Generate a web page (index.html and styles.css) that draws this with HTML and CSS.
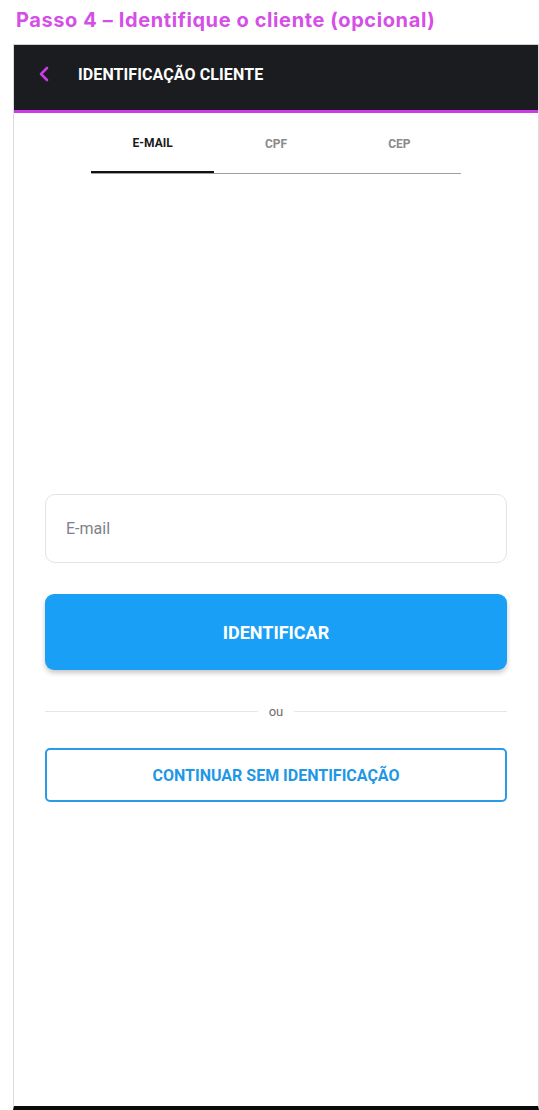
FILE: index.html
```html
<!DOCTYPE html>
<html lang="pt-BR">
<head>
    <meta charset="UTF-8">
    <meta name="viewport" content="width=device-width, initial-scale=1.0">
    <title>Passo 4 - Identifique o cliente</title>
    <link rel="stylesheet" href="styles.css">
</head>
<body>
    <h1 class="step-title">Passo 4 – Identifique o cliente (opcional)</h1>

    <div class="phone">
        <header class="app-bar">
            <button class="back-btn" aria-label="Voltar">
                <svg width="12" height="16" viewBox="0 0 12 16">
                    <path d="M9 2 L3 8 L9 14" fill="none" stroke="#c93ce6" stroke-width="2.6" stroke-linecap="round" stroke-linejoin="round"/>
                </svg>
            </button>
            <span class="app-bar-title">IDENTIFICAÇÃO CLIENTE</span>
        </header>

        <nav class="tabs">
            <div class="tab active">E-MAIL</div>
            <div class="tab">CPF</div>
            <div class="tab">CEP</div>
        </nav>

        <main class="form-area">
            <div class="field">
                <input type="email" placeholder="E-mail">
            </div>
            <button class="btn-primary">IDENTIFICAR</button>

            <div class="divider">
                <span>ou</span>
            </div>

            <button class="btn-outline">CONTINUAR SEM IDENTIFICAÇÃO</button>
        </main>
    </div>
</body>
</html>
```

FILE: styles.css
```css
html, body {
    margin: 0;
    padding: 0;
    background-color: #ffffff;
    height: 100%;
}

body {
    font-family: Roboto, 'Noto Sans', sans-serif;
    display: flex;
    flex-direction: column;
}

.step-title {
    margin: 0;
    padding: 8px 0 0 16px;
    height: 36px;
    box-sizing: border-box;
    font-family: Inter, 'Noto Sans', sans-serif;
    font-size: 20px;
    font-weight: 700;
    color: #d44fe6;
    letter-spacing: 0.6px;
}

/* telefone */
.phone {
    margin-left: 13px;
    margin-top: 8px;
    flex: 1;
    display: flex;
    flex-direction: column;
    border-left: 1px solid #dcdcdc;
    border-right: 1px solid #dcdcdc;
    border-top: 1px solid #cfcfcf;
    border-bottom: 4px solid #0a0a0a;
    background-color: #ffffff;
}

.app-bar {
    height: 68px;
    box-sizing: border-box;
    padding-bottom: 7px;
    background-color: #1b1c20;
    border-bottom: 3px solid #c93ce6;
    display: flex;
    align-items: center;
    padding-left: 24px;
    gap: 26px;
}

.back-btn {
    background: none;
    border: none;
    padding: 0;
    width: 14px;
    display: flex;
    align-items: center;
    cursor: pointer;
}

.app-bar-title {
    color: #ffffff;
    font-weight: 700;
    font-size: 16px;
    letter-spacing: 0.1px;
}

/* abas */
.tabs {
    width: 370px;
    margin: 0 auto;
    display: flex;
    border-bottom: 1px solid #9e9e9e;
}

.tab {
    flex: 1;
    height: 60px;
    padding-top: 2px;
    display: flex;
    align-items: center;
    justify-content: center;
    font-size: 12px;
    font-weight: 700;
    color: #8a8a8a;
    box-sizing: border-box;
}

.tab.active {
    color: #1a1a1a;
    border-bottom: 2px solid #111111;
    margin-bottom: -1px;
}

/* formulario */
.form-area {
    padding: 320px 31px 0 31px;
    display: flex;
    flex-direction: column;
}

.field input {
    width: 100%;
    box-sizing: border-box;
    height: 69px;
    border: 1px solid #e3e3e3;
    border-radius: 10px;
    padding: 0 20px;
    font-family: Roboto, sans-serif;
    font-size: 16px;
    color: #333;
    outline: none;
}

.field input::placeholder {
    color: #7d828a;
}

.btn-primary {
    margin-top: 31px;
    height: 76px;
    border: none;
    border-radius: 9px;
    background-color: #1a9ff7;
    color: #ffffff;
    font-family: Roboto, sans-serif;
    font-size: 18px;
    font-weight: 700;
    box-shadow: 0 3px 5px rgba(0, 0, 0, 0.22);
    cursor: pointer;
}

.divider {
    margin-top: 34px;
    display: flex;
    align-items: center;
    gap: 11px;
    font-size: 13px;
    color: #6f6f6f;
}

.divider::before,
.divider::after {
    content: "";
    flex: 1;
    height: 1px;
    background-color: #e6e6e6;
}

.btn-outline {
    margin-top: 29px;
    height: 54px;
    border: 2px solid #2b9be8;
    border-radius: 5px;
    background-color: #ffffff;
    color: #1e97e6;
    font-family: Roboto, sans-serif;
    font-size: 16px;
    font-weight: 700;
    cursor: pointer;
}
```
